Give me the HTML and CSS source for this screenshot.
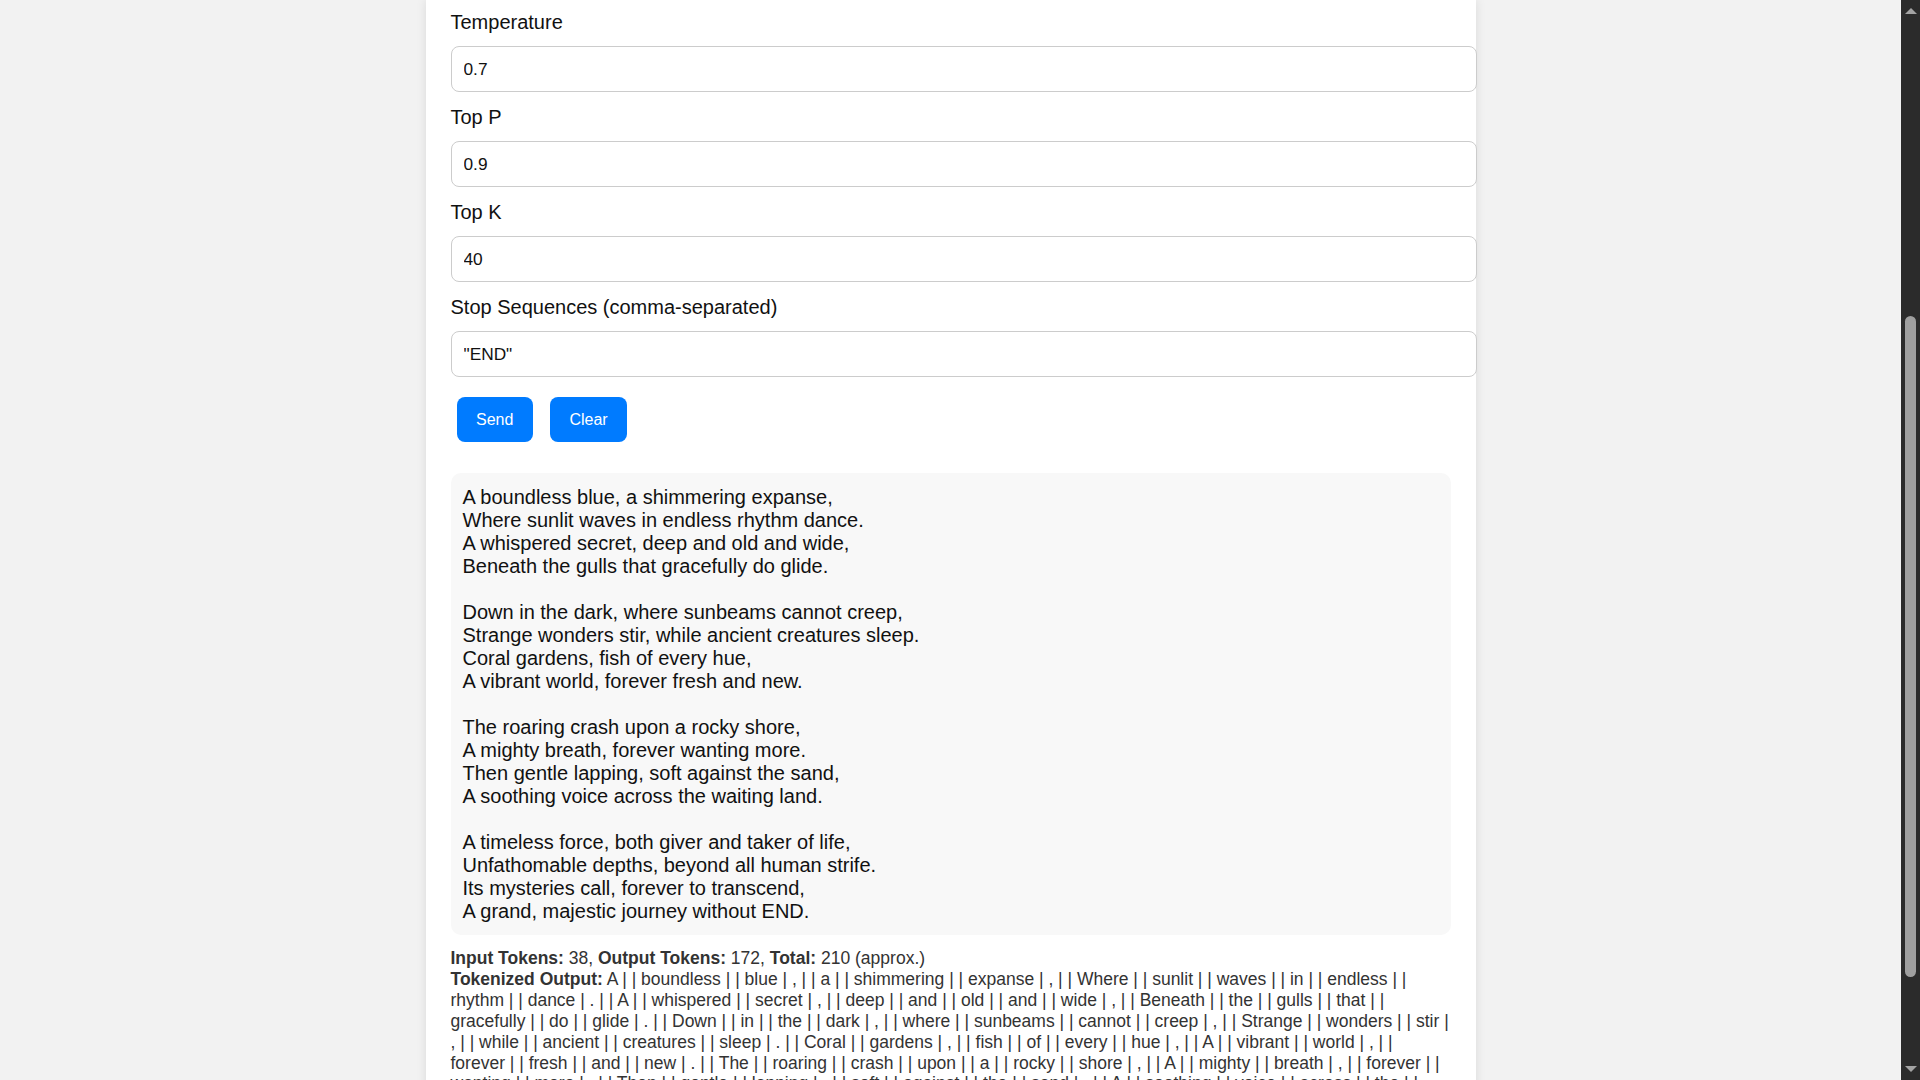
FILE: index.html
```html
<!DOCTYPE html>
<html lang="en">
<head>
<meta charset="utf-8">
<title>Gemini Playground</title>
<link rel="stylesheet" href="styles.css">
</head>
<body>
<div class="viewport">
  <main class="page">
    <div class="container">
      <div class="field">
        <label class="field-label" for="temperature">Temperature</label>
        <input class="field-input" id="temperature" type="text" value="0.7">
      </div>
      <div class="field">
        <label class="field-label" for="topp">Top P</label>
        <input class="field-input" id="topp" type="text" value="0.9">
      </div>
      <div class="field">
        <label class="field-label" for="topk">Top K</label>
        <input class="field-input" id="topk" type="text" value="40">
      </div>
      <div class="field">
        <label class="field-label" for="stop">Stop Sequences (comma-separated)</label>
        <input class="field-input" id="stop" type="text" value="&quot;END&quot;">
      </div>
      <div class="actions">
        <button class="btn" type="button">Send</button>
        <button class="btn" type="button">Clear</button>
      </div>
      <div class="output">A boundless blue, a shimmering expanse,
Where sunlit waves in endless rhythm dance.
A whispered secret, deep and old and wide,
Beneath the gulls that gracefully do glide.

Down in the dark, where sunbeams cannot creep,
Strange wonders stir, while ancient creatures sleep.
Coral gardens, fish of every hue,
A vibrant world, forever fresh and new.

The roaring crash upon a rocky shore,
A mighty breath, forever wanting more.
Then gentle lapping, soft against the sand,
A soothing voice across the waiting land.

A timeless force, both giver and taker of life,
Unfathomable depths, beyond all human strife.
Its mysteries call, forever to transcend,
A grand, majestic journey without END.</div>
      <div class="stats">
        <div><b>Input Tokens:</b> 38, <b>Output Tokens:</b> 172, <b>Total:</b> 210 (approx.)</div>
        <div><b>Tokenized Output:</b> A | | boundless | | blue | , | | a | | shimmering | | expanse | , | | Where | | sunlit | | waves | | in | | endless | | rhythm | | dance | . | | A | | whispered | | secret | , | | deep | | and | | old | | and | | wide | , | | Beneath | | the | | gulls | | that | | gracefully | | do | | glide | . | | Down | | in | | the | | dark | , | | where | | sunbeams | | cannot | | creep | , | | Strange | | wonders | | stir | , | | while | | ancient | | creatures | | sleep | . | | Coral | | gardens | , | | fish | | of | | every | | hue | , | | A | | vibrant | | world | , | | forever | | fresh | | and | | new | . | | The | | roaring | | crash | | upon | | a | | rocky | | shore | , | | A | | mighty | | breath | , | | forever | | wanting | | more | . | | Then | | gentle | | lapping | , | | soft | | against | | the | | sand | , | | A | | soothing | | voice | | across | | the | | waiting | | land | . | | A | | timeless | | force | , | | both | | giver | | and | | taker | | of | | life | , | | Unfathomable | | depths | , | | beyond | | all | | human | | strife | . | | Its | | mysteries | | call | , | | forever | | to | | transcend | , | | A | | grand | , | | majestic | | journey | | without | | END | .</div>
      </div>
    </div>
  </main>
  <div class="scrollbar" aria-hidden="true">
    <div class="sb-arrow sb-up"></div>
    <div class="sb-track"><div class="sb-thumb"></div></div>
    <div class="sb-arrow sb-down"></div>
  </div>
</div>
</body>
</html>
```
FILE: styles.css
```css
html, body {
  margin: 0;
  padding: 0;
  height: 100%;
  overflow: hidden;
}
body {
  background: #f2f2f2;
  font-family: "Liberation Sans", Arial, sans-serif;
  color: #111;
}
.viewport {
  display: flex;
  height: 1080px;
  overflow: hidden;
}
.page {
  flex: 1;
  min-width: 0;
  overflow: hidden;
}
.container {
  width: 1000px;
  margin: 0 auto;
  padding: 11px 25px 40px;
  background: #fff;
  box-shadow: 0 0 10px rgba(0, 0, 0, 0.1);
  min-height: 1100px;
}
.field-label {
  display: block;
  font-size: 20px;
  line-height: 23px;
  margin-bottom: 12px;
  color: #111;
}
.field-input {
  display: block;
  width: 100%;
  padding: 12px;
  margin: 0 0 14px;
  border: 1px solid #cccccc;
  border-radius: 8px;
  font-family: "Liberation Sans", Arial, sans-serif;
  font-size: 17.3px;
  line-height: 20px;
  color: #111;
  background: #fff;
  outline: none;
}
.actions {
  display: flex;
  gap: 17px;
  padding: 6px 0 0 6px;
  margin-bottom: 31px;
}
.btn {
  background: #007bff;
  color: #fff;
  border: none;
  border-radius: 8px;
  padding: 13px 19.5px;
  font-family: "Liberation Sans", Arial, sans-serif;
  font-size: 16px;
  line-height: 19px;
  cursor: pointer;
}
.output {
  background: #f8f8f8;
  border-radius: 10px;
  padding: 13px 12px 12px;
  font-size: 20px;
  line-height: 23px;
  white-space: pre-wrap;
  color: #111;
}
.stats {
  margin-top: 13px;
  font-size: 17.5px;
  line-height: 20.9px;
  color: #333;
}
.stats b {
  color: #333;
}
.scrollbar {
  width: 19px;
  flex: none;
  background: #2b2b2b;
  display: flex;
  flex-direction: column;
  align-items: center;
}
.sb-arrow {
  width: 0;
  height: 0;
  border-left: 6px solid transparent;
  border-right: 6px solid transparent;
  flex: none;
}
.sb-up {
  margin-top: 8px;
  border-bottom: 6px solid #a3a3a3;
}
.sb-down {
  margin-bottom: 8px;
  border-top: 6px solid #a3a3a3;
}
.sb-track {
  flex: 1;
  width: 100%;
  display: flex;
  justify-content: center;
}
.sb-thumb {
  width: 11px;
  height: 661px;
  margin-top: 302px;
  background: #9f9f9f;
  border-radius: 6px;
}
```
